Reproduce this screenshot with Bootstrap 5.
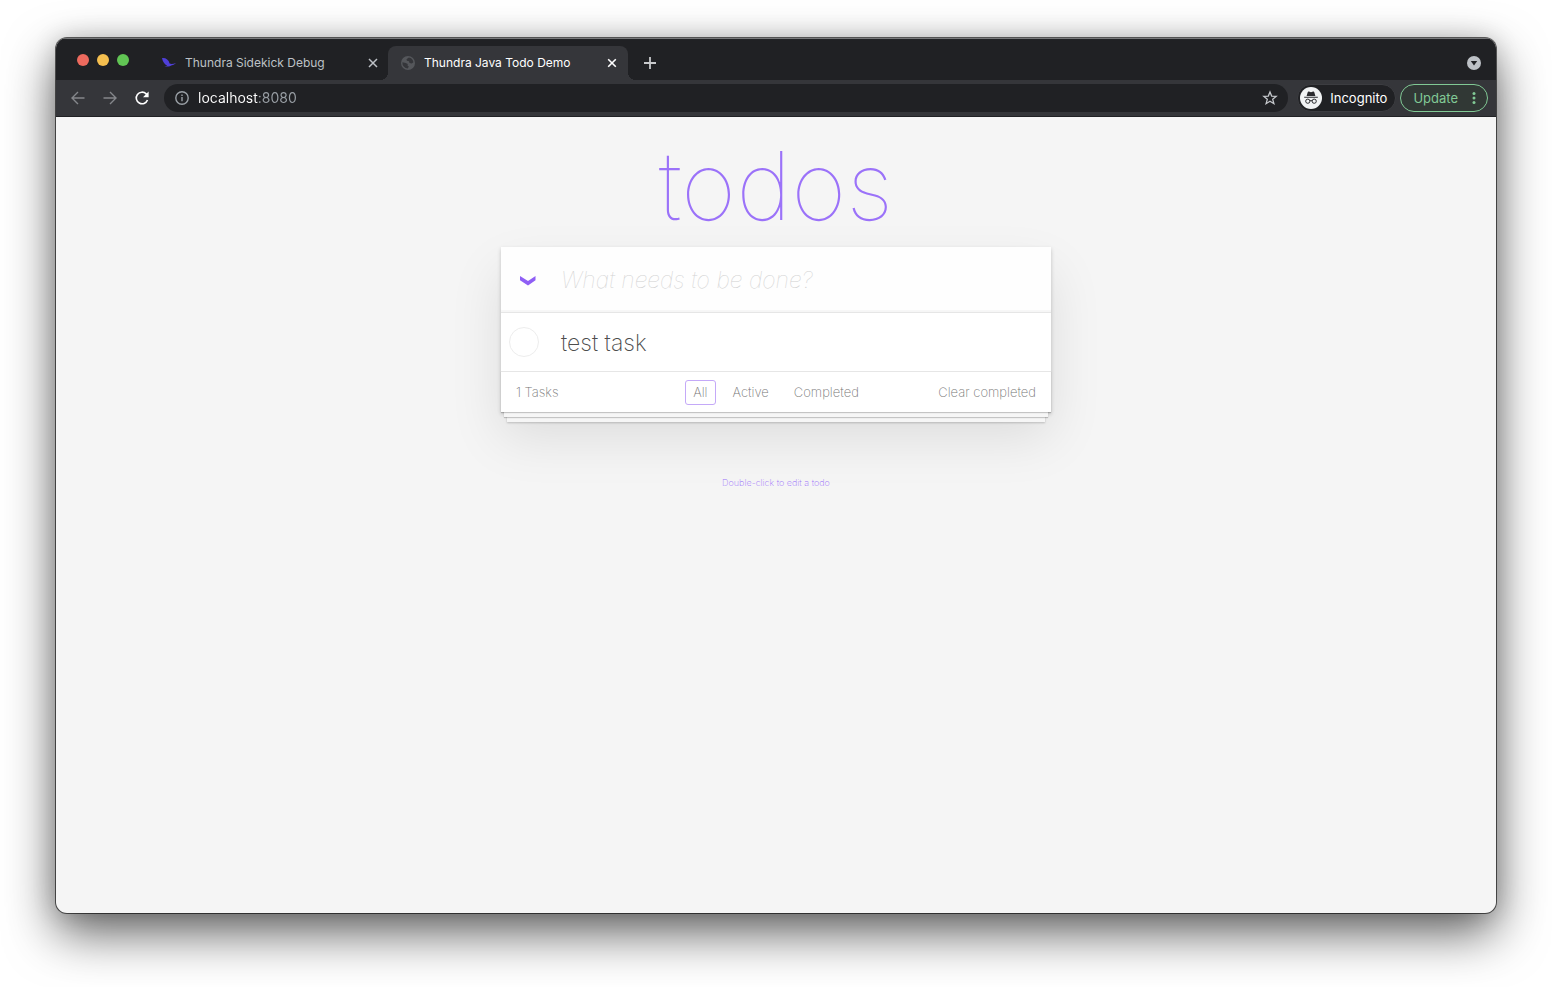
<!DOCTYPE html>
<html lang="en">
<head>
<meta charset="utf-8">
<meta name="viewport" content="width=device-width, initial-scale=1">
<title>Thundra Java Todo Demo</title>
<link href="https://cdn.jsdelivr.net/npm/bootstrap@5.3.0/dist/css/bootstrap.min.css" rel="stylesheet">
<style>
  body { font-family: Inter, "Liberation Sans", sans-serif; background: #fff; }
  button { background: none; border: 0; padding: 0; }
  svg { display: block; flex: none; }

  .desktop { min-height: 100vh; padding: 38px 56px 74px; }
  .app-window {
    background: #f5f5f5; border-radius: 11px; overflow: hidden;
    box-shadow: 0 0 0 1px rgba(0,0,0,.6), 0 20px 50px rgba(0,0,0,.62), 0 0 24px rgba(0,0,0,.16);
  }

  /* tab strip */
  .tab-strip { height: 42px; background: #202124; border-top: 1px solid #77787a; padding: 0 15px 0 21px; }
  .light { width: 12px; height: 12px; border-radius: 50%; }
  .light-close { background: #ed6a5e; }
  .light-min { background: #f5bf4f; }
  .light-max { background: #61c554; }
  .lights { gap: 8px; margin-right: 20px; height: 40px; }
  .tab { width: 239px; height: 34px; padding: 0 10px 0 13px; gap: 9px; border-radius: 8px 8px 0 0; font-size: 12px; color: #bdc1c6; }
  .tab a { color: inherit; }
  .tab-active { width: 240px; padding-right: 11px; background: #35363a; color: #fff; position: relative; }
  .tab-active::before, .tab-active::after {
    content: ""; position: absolute; bottom: 0; width: 8px; height: 8px;
  }
  .tab-active::before { left: -8px; background: radial-gradient(circle at 0 0, transparent 8px, #35363a 8px); }
  .tab-active::after { right: -8px; background: radial-gradient(circle at 100% 0, transparent 8px, #35363a 8px); }
  .new-tab { margin-left: 15px; height: 34px; color: #c8cacd; }

  /* toolbar */
  .toolbar { height: 37px; background: #35363a; border-bottom: 1px solid #202124; padding: 0 8px 0 14px; }
  .nav-buttons { gap: 16px; margin-right: 14px; color: #85878b; }
  .address { height: 28px; border-radius: 14px; background: #202124; padding: 0 10px; gap: 8px; margin-right: 9px; }
  .address input {
    border: 0; outline: 0; padding: 0; height: 20px; min-width: 0; font-size: 14px; line-height: 20px;
    color: transparent; background: linear-gradient(to right, #fff 61px, #9aa0a6 61px); -webkit-background-clip: text; background-clip: text;
  }
  .chip { height: 28px; border-radius: 14px; font-size: 13px; line-height: 18px; }
  .chip-incognito { background: #202124; border: 1px solid #3c3d41; color: #fff; padding: 0 8px 0 2px; gap: 8px; margin-right: 4px; }
  .chip-update { border: 1px solid #81c995; background: #313835; color: #81c995; padding: 0 10px 0 12px; gap: 13px; }

  /* page */
  .page { color: #4d4d4d; font-weight: 200; }
  .page-title { font-size: 95px; font-weight: 100; line-height: 122px; padding-top: 8px; margin: 0; color: #9b72f9; }
  .todo-card { width: 100%; max-width: 550px; background: #fff; box-shadow: 0 2px 4px rgba(0,0,0,.2), 0 25px 50px rgba(0,0,0,.1); }
  .new-row { height: 65px; box-shadow: inset 0 -2px 1px rgba(0,0,0,.03); background: #fefefe; }
  .toggle-all { width: 54px; padding-left: 19px; padding-top: 2px; cursor: pointer; }
  .new-row input[type=text] { border: 0; outline: 0; background: none; padding: 2px 0 0; margin-left: 6px; font-size: 23px; font-weight: 200; min-width: 0; color: #4d4d4d; }
  .new-row input::placeholder { color: #d2d2d2; font-style: italic; font-weight: 100; opacity: 1; }
  .todo-item { height: 59px; border-top: 1px solid #e6e6e6; padding-left: 8px; gap: 22px; font-size: 23px; }
  .todo-item input { appearance: none; width: 30px; height: 30px; border: 1px solid #ededed; border-radius: 50%; margin: 0; }
  .todo-item label { font-weight: 200; padding-top: 2px; }
  .todo-footer {
    height: 41px; border-top: 1px solid #e6e6e6; padding: 0 15px; font-size: 13px; line-height: 17px; color: #777;
    display: grid; grid-template-columns: 1fr auto 1fr; align-items: center;
    box-shadow: 0 1px 1px rgba(0,0,0,.2), 0 8px 0 -3px #f6f6f6, 0 9px 1px -3px rgba(0,0,0,.2), 0 16px 0 -6px #f6f6f6, 0 17px 2px -6px rgba(0,0,0,.2);
  }
  .todo-footer a { display: block; color: inherit; text-decoration: none; padding: 3px 7px; border: 1px solid transparent; border-radius: 3px; }
  .todo-footer a.selected { border-color: #c4a9f8; }
  .filters { gap: 9px; }
  .todo-footer button { color: inherit; font-weight: 200; line-height: 17px; }
  .hint { margin-top: 64px; font-size: 9px; line-height: 14px; color: #9b72f9; text-shadow: 0 1px 0 rgba(255,255,255,.5); }
</style>
</head>
<body>
<div class="desktop d-flex flex-column">
  <div class="app-window d-flex flex-column flex-grow-1">

    <header class="tab-strip d-flex align-items-end">
      <div class="lights d-flex align-items-center">
        <button class="light light-close" aria-label="Close window"></button>
        <button class="light light-min" aria-label="Minimize window"></button>
        <button class="light light-max" aria-label="Zoom window"></button>
      </div>
      <div class="tab d-flex align-items-center">
        <svg width="14" height="14" viewBox="0 0 14 14" fill="#4f3fd8"><path d="M0 2.2C3.500 1.700 6.600 3.600 7.600 7.600c1.800.8 4 .2 6.400-.6-1.200 1.300-2.600 1.900-4.200 2.300-1.700 1.200-4.400 1.500-7.800.9 1.700-.1 2.700-.3 3.200-.8C2.500 8.500.8 5.800 0 2.200Z"/></svg>
        <a href="#" class="flex-grow-1 text-decoration-none text-truncate">Thundra Sidekick Debug</a>
        <button aria-label="Close tab" class="text-reset"><svg width="10" height="10" viewBox="0 0 10 10" stroke="currentColor" stroke-width="1.500"><path d="M1 1l8 8M9 1l-8 8"/></svg></button>
      </div>
      <div class="tab tab-active d-flex align-items-center">
        <svg width="14" height="14" viewBox="0 0 14 14"><circle cx="7" cy="7" r="7" fill="#55575b"/><path d="M7.800 1.500 5.500 3.300 5.900 4.800 8 5.300 8.500 7 10.800 7.600 12.400 6.200A5.500 5.500 0 0 0 7.800 1.500ZM1.400 6.300 4.700 7 6.800 8 6.500 9.600 7.800 10.500 6.800 12.500A5.600 5.600 0 0 1 1.400 6.300Z" fill="#35363a"/></svg>
        <a href="#" class="flex-grow-1 text-decoration-none text-truncate">Thundra Java Todo Demo</a>
        <button aria-label="Close tab" class="text-reset"><svg width="10" height="10" viewBox="0 0 10 10" stroke="currentColor" stroke-width="1.600"><path d="M1.200 1.200l7.600 7.600M8.800 1.200l-7.600 7.600"/></svg></button>
      </div>
      <button class="new-tab d-flex align-items-center" aria-label="New tab"><svg width="14" height="14" viewBox="0 0 14 14" stroke="currentColor" stroke-width="1.800"><path d="M7 1v12M1 7h12"/></svg></button>
      <button class="ms-auto mb-2" aria-label="Search tabs"><svg width="14" height="16" viewBox="0 0 14 16"><circle cx="7" cy="7" r="7" fill="#bdc1c6"/><path d="M3.800 5h6.400L7 9.500Z" fill="#202124"/></svg></button>
    </header>

    <div class="toolbar d-flex align-items-center">
      <div class="nav-buttons d-flex">
        <button aria-label="Back" class="text-reset"><svg width="16" height="16" viewBox="0 0 16 16" fill="none" stroke="currentColor" stroke-width="1.400"><path d="M14.500 8H2M8 2 2 8l6 6"/></svg></button>
        <button aria-label="Forward" class="text-reset"><svg width="16" height="16" viewBox="0 0 16 16" fill="none" stroke="currentColor" stroke-width="1.400"><path d="M1.500 8H14M8 2l6 6-6 6"/></svg></button>
        <button aria-label="Reload"><svg width="16" height="16" viewBox="0 0 16 16"><path d="M13.500 10a5.800 5.800 0 1 1-1.300-6.100L13.500 5.500" fill="none" stroke="#fff" stroke-width="1.600"/><path d="M14.600 1.600v5.600H9Z" fill="#fff"/></svg></button>
      </div>
      <div class="address d-flex align-items-center flex-grow-1">
        <svg width="16" height="16" viewBox="0 0 16 16"><circle cx="8" cy="8" r="6.200" fill="none" stroke="#9aa0a6" stroke-width="1.400"/><path d="M7.300 7h1.400v4.200H7.300zM7.300 4.600h1.400V6H7.300z" fill="#9aa0a6"/></svg>
        <input class="flex-grow-1" type="text" value="localhost:8080" aria-label="Address">
        <button aria-label="Bookmark"><svg width="16" height="16" viewBox="0 0 16 16" fill="none" stroke="#c4c7cb" stroke-width="1.300"><path d="m8 1.900 1.700 4.200 4.500.3-3.500 2.900 1.200 4.400L8 11.300l-3.900 2.400 1.200-4.400L1.800 6.400l4.500-.3Z"/></svg></button>
      </div>
      <button class="chip chip-incognito d-flex align-items-center">
        <svg width="22" height="22" viewBox="0 0 22 22"><circle cx="11" cy="11" r="11" fill="#f1f3f4"/><path d="M7.700 5.200c.2-.6.7-.8 1.200-.6l2.100.6 2.100-.6c.5-.2 1 0 1.200.6l1.100 3.700H6.600ZM4.200 9.700h13.600v1H4.200z" fill="#2b2c30"/><g fill="none" stroke="#2b2c30" stroke-width="1"><circle cx="7.800" cy="14.200" r="2.100"/><circle cx="14.200" cy="14.200" r="2.100"/><path d="M9.900 13.900q1.100-.7 2.200 0"/></g></svg>
        <span>Incognito</span>
      </button>
      <button class="chip chip-update d-flex align-items-center">
        <span>Update</span>
        <svg width="6" height="14" viewBox="0 0 6 14" fill="currentColor"><circle cx="3" cy="2.500" r="1.500"/><circle cx="3" cy="7" r="1.500"/><circle cx="3" cy="11.500" r="1.500"/></svg>
      </button>
    </div>

    <main class="page d-flex flex-column align-items-center">
      <h1 class="page-title">todos</h1>
      <section class="todo-card">
        <div class="new-row d-flex align-items-center">
          <input type="checkbox" id="toggle-all" class="visually-hidden">
          <label for="toggle-all" class="toggle-all" aria-label="Mark all as complete"><svg width="16" height="12" viewBox="0 0 16 12"><path d="M0 1 8 6l7.500-5v4.200L8 10.400 0 5.200Z" fill="#8f5ff5"/></svg></label>
          <input class="flex-grow-1" type="text" placeholder="What needs to be done?" aria-label="New todo">
        </div>
        <div class="todo-item d-flex align-items-center">
          <input type="checkbox" id="todo-1">
          <label for="todo-1">test task</label>
        </div>
        <footer class="todo-footer">
          <span>1 Tasks</span>
          <nav class="filters d-flex" aria-label="Filter">
            <a href="#/" class="selected">All</a>
            <a href="#/active">Active</a>
            <a href="#/completed">Completed</a>
          </nav>
          <button class="text-end">Clear completed</button>
        </footer>
      </section>
      <p class="hint mb-0">Double-click to edit a todo</p>
    </main>
  </div>
</div>
<script src="https://cdn.jsdelivr.net/npm/bootstrap@5.3.0/dist/js/bootstrap.bundle.min.js"></script>
</body>
</html>
